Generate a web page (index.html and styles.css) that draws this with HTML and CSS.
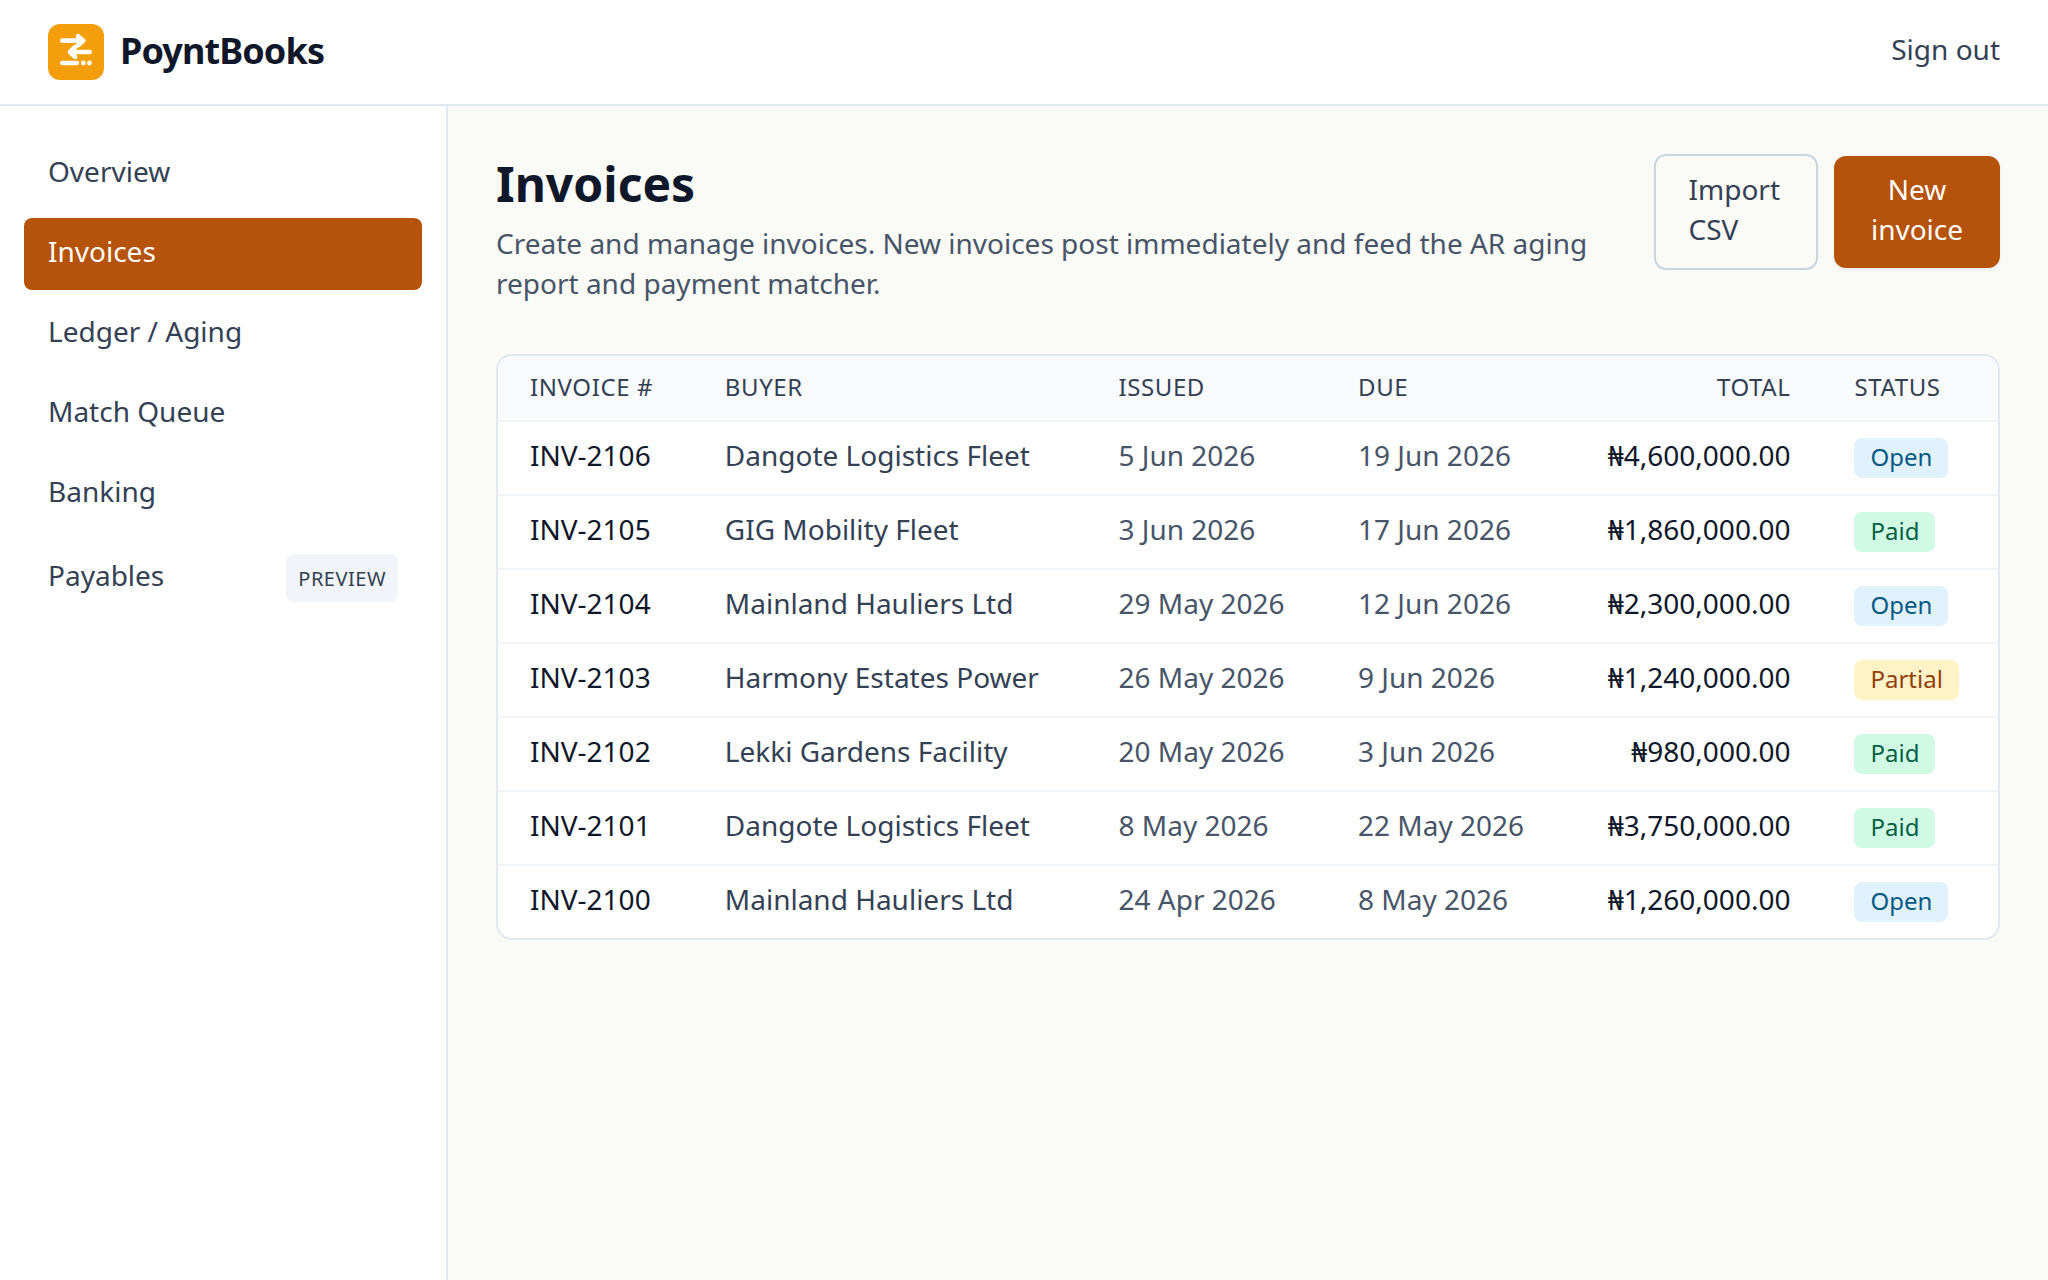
FILE: index.html
```html
<!doctype html>
<html lang="en">
<head>
    <meta charset="UTF-8">
    <title>PoyntBooks</title>
    <link rel="stylesheet" href="styles.css">
</head>
<body>
    <header class="topbar">
        <a class="brand" href="#">
            <svg class="logo" viewBox="0 0 56 56" fill="none" stroke="#fff" stroke-width="4.7" stroke-linecap="round" stroke-linejoin="round">
                <rect width="56" height="56" rx="12" fill="#f59e0b" stroke="none"/>
                <path d="M14.4 16.7H35.2M30 12.2L35.2 16.7L30 21.2"/>
                <path d="M41.6 28H22M27 23.2L22 28L27 32.8"/>
                <path d="M14.4 39H28.8"/>
                <circle cx="35.4" cy="39" r="2.4" fill="#fff" stroke="none"/>
                <circle cx="41.4" cy="39" r="2.4" fill="#fff" stroke="none"/>
            </svg>
            <span>PoyntBooks</span>
        </a>
        <a class="signout" href="#">Sign out</a>
    </header>
    <div class="layout">
        <nav class="sidebar">
            <a href="#">Overview</a>
            <a class="selected" href="#">Invoices</a>
            <a href="#">Ledger / Aging</a>
            <a href="#">Match Queue</a>
            <a href="#">Banking</a>
            <a href="#">Payables <span class="preview">Preview</span></a>
        </nav>
        <main class="content">
            <div class="page-head">
                <div class="intro">
                    <h1>Invoices</h1>
                    <p>Create and manage invoices. New invoices post immediately and feed the AR aging report and payment matcher.</p>
                </div>
                <div class="actions">
                    <a class="btn-import" href="#">Import CSV</a>
                    <button class="btn-new">New invoice</button>
                </div>
            </div>
            <div class="card">
                <table>
                    <thead>
                        <tr><th>Invoice #</th><th>Buyer</th><th>Issued</th><th>Due</th><th class="total">Total</th><th class="status">Status</th></tr>
                    </thead>
                    <tbody>
                        <tr><td class="num">INV-2106</td><td class="buyer">Dangote Logistics Fleet</td><td>5 Jun 2026</td><td>19 Jun 2026</td><td class="total">₦4,600,000.00</td><td><span class="badge open">Open</span></td></tr>
                        <tr><td class="num">INV-2105</td><td class="buyer">GIG Mobility Fleet</td><td>3 Jun 2026</td><td>17 Jun 2026</td><td class="total">₦1,860,000.00</td><td><span class="badge paid">Paid</span></td></tr>
                        <tr><td class="num">INV-2104</td><td class="buyer">Mainland Hauliers Ltd</td><td>29 May 2026</td><td>12 Jun 2026</td><td class="total">₦2,300,000.00</td><td><span class="badge open">Open</span></td></tr>
                        <tr><td class="num">INV-2103</td><td class="buyer">Harmony Estates Power</td><td>26 May 2026</td><td>9 Jun 2026</td><td class="total">₦1,240,000.00</td><td><span class="badge partial">Partial</span></td></tr>
                        <tr><td class="num">INV-2102</td><td class="buyer">Lekki Gardens Facility</td><td>20 May 2026</td><td>3 Jun 2026</td><td class="total">₦980,000.00</td><td><span class="badge paid">Paid</span></td></tr>
                        <tr><td class="num">INV-2101</td><td class="buyer">Dangote Logistics Fleet</td><td>8 May 2026</td><td>22 May 2026</td><td class="total">₦3,750,000.00</td><td><span class="badge paid">Paid</span></td></tr>
                        <tr><td class="num">INV-2100</td><td class="buyer">Mainland Hauliers Ltd</td><td>24 Apr 2026</td><td>8 May 2026</td><td class="total">₦1,260,000.00</td><td><span class="badge open">Open</span></td></tr>
                    </tbody>
                </table>
            </div>
        </main>
    </div>
</body>
</html>
```
FILE: styles.css
```css
*{
    margin: 0;
    padding: 0;
    box-sizing: border-box;
}
a{
    color: inherit;
    text-decoration: none;
}
body{
    min-height: 100vh;
    display: flex;
    flex-direction: column;
    background: #fafaf7;
    color: #334155;
    font-family: "Noto Sans", sans-serif;
    font-size: 28px;
    line-height: 40px;
}
/* top bar */
.topbar{
    height: 106px;
    padding: 0 48px;
    display: flex;
    align-items: center;
    justify-content: space-between;
    background: #fff;
    border-bottom: 2px solid #e2e8f0;
}
.brand{
    display: flex;
    align-items: center;
    gap: 16px;
    color: #0f172a;
    font-size: 36px;
    font-weight: bold;
    line-height: 54px;
    letter-spacing: -0.9px;
}
.brand span{
    padding-bottom: 2px;
}
.logo{
    width: 56px;
    height: 56px;
}
.signout{
    padding-bottom: 6px;
}
.layout{
    flex: 1;
    display: flex;
}
/* side menu */
.sidebar{
    width: 448px;
    padding: 32px 24px;
    display: flex;
    flex-direction: column;
    gap: 8px;
    background: #fff;
    border-right: 2px solid #e2e8f0;
}
.sidebar a{
    padding: 13px 24px 19px;
    display: flex;
    align-items: center;
    justify-content: space-between;
    border-radius: 8px;
}
.sidebar .selected{
    background: #b45309;
    color: #fff;
}
.preview{
    margin: 3px 0 -3px;
    padding: 5px 12px 3px;
    border-radius: 8px;
    background: #f1f5f9;
    font-size: 20px;
    letter-spacing: 0.5px;
    text-transform: uppercase;
}
/* main column */
.content{
    flex: 1;
    padding: 48px;
}
.page-head{
    display: flex;
    align-items: flex-start;
    justify-content: space-between;
    margin-bottom: 48px;
}
.intro{
    width: 1110px;
    margin-top: -2px;
    padding-bottom: 3px;
}
h1{
    color: #0f172a;
    font-size: 48px;
    line-height: 64px;
}
.intro p{
    margin-top: 7px;
    color: #475569;
}
.actions{
    display: flex;
    align-items: center;
    gap: 16px;
}
.btn-import{
    width: 164px;
    padding: 13px 30px 19px 32.5px;
    border: 2px solid #cbd5e1;
    border-radius: 12px;
}
.btn-new{
    width: 166px;
    padding: 13px 32px 19px;
    border: 0;
    border-radius: 12px;
    background: #b45309;
    box-shadow: 0 2px 4px rgba(0,0,0,0.05);
    color: #fff;
    font: inherit;
}
/* invoice table */
.card{
    overflow: hidden;
    background: #fff;
    border: 2px solid #e2e8f0;
    border-radius: 16px;
}
table{
    width: 100%;
    border-spacing: 0;
}
th,td{
    padding: 13px 32px 19px;
    text-align: left;
    white-space: nowrap;
}
thead{
    background: #f8fafc;
}
th{
    padding-top: 15px;
    padding-bottom: 17px;
    font-size: 24px;
    font-weight: normal;
    line-height: 32px;
    letter-spacing: 0.6px;
    text-transform: uppercase;
}
td{
    color: #475569;
    border-top: 2px solid #f1f5f9;
}
.status{
    width: 175.55px;
}
.num{
    color: #0f172a;
}
.buyer{
    color: #334155;
}
.total{
    text-align: right;
}
td.total{
    color: #0f172a;
}
.badge{
    display: inline-block;
    margin: 3px 0 -3px;
    padding: 3px 16px 5px;
    border-radius: 8px;
    font-size: 24px;
    line-height: 32px;
    vertical-align: top;
}
.open{
    background: #e0f2fe;
    color: #075985;
}
.paid{
    background: #d1fae5;
    color: #065f46;
}
.partial{
    background: #fef3c7;
    color: #92400e;
}
```
